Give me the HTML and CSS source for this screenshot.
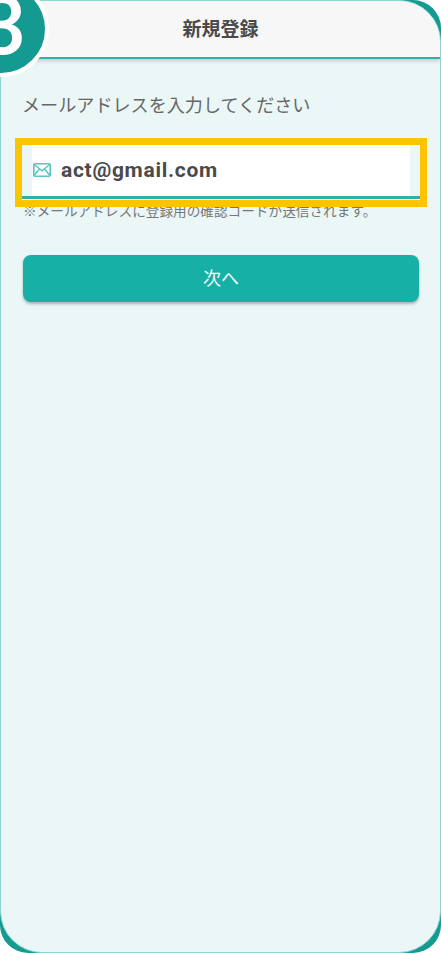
FILE: index.html
```html
<!DOCTYPE html>
<html lang="ja">
<head>
<meta charset="utf-8">
<title>新規登録</title>
<link rel="stylesheet" href="styles.css">
</head>
<body>
<div class="frame">
  <div class="screen">
    <header class="header"><h1 class="title">新規登録</h1></header>
    <main class="content">
      <p class="label">メールアドレスを入力してください</p>
      <div class="field">
        <div class="field-inner">
          <svg class="mail-icon" viewBox="0 0 18 14" width="18" height="14" aria-hidden="true">
            <rect x="0.8" y="0.8" width="16.4" height="12.4" rx="1.5" fill="none" stroke="#57c6bd" stroke-width="1.6"/>
            <path d="M1 1.2 L9 7.8 L17 1.2 M1 12.8 L6.6 5.8 M17 12.8 L11.4 5.8" fill="none" stroke="#57c6bd" stroke-width="1.4"/>
          </svg>
          <span class="email">act@gmail.com</span>
        </div>
      </div>
      <p class="hint">※メールアドレスに登録用の確認コードが送信されます。</p>
      <button class="next" type="button">次へ</button>
    </main>
  </div>
</div>
<div class="badge"><span class="badge-num">3</span></div>
</body>
</html>
```
FILE: styles.css
```css
* { box-sizing: border-box; }
html, body {
  margin: 0;
  padding: 0;
  width: 441px;
  height: 953px;
  overflow: hidden;
  background: #fff;
  font-family: "Noto Sans CJK JP", "Noto Sans", sans-serif;
}
.frame {
  width: 441px;
  height: 953px;
  background: #159a92;
  border-radius: 28px;
}
.screen {
  width: 100%;
  height: 100%;
  border: 1px solid #8fd6cf;
  border-radius: 42px;
  background: #eaf7f6;
  overflow: hidden;
  display: flex;
  flex-direction: column;
}
.header {
  height: 58px;
  flex: none;
  padding-bottom: 4px;
  background: #f7f7f7;
  border-bottom: 2px solid #2db1a8;
  box-shadow: 0 2px 4px rgba(0, 0, 0, 0.18);
  display: flex;
  align-items: center;
  justify-content: center;
}
.title {
  margin: 0;
  font-size: 19px;
  font-weight: 700;
  color: #4a4a4a;
  line-height: 1;
}
.content {
  padding: 0 21px;
  display: flex;
  flex-direction: column;
}
.label {
  margin: 32px 0 0;
  font-size: 18.1px;
  line-height: 26px;
  color: #666;
  white-space: nowrap;
}
.field {
  position: relative;
  z-index: 1;
  margin: 28px 0 0;
  height: 55px;
  width: 398px;
  outline: 7px solid #ffc300;
  background: #eaf7f6;
}
.field-inner {
  margin: 0 10px;
  height: 51px;
  background: #fff;
  display: flex;
  align-items: center;
  gap: 10px;
  padding: 0 0 1px 1px;
}
.field::after {
  content: "";
  display: block;
  height: 4px;
  background: linear-gradient(#2db1a8 0 3px, #fff 3px);
}
.mail-icon { flex: none; }
.email {
  font-family: Roboto, "Liberation Sans", sans-serif;
  font-weight: 700;
  font-size: 21px;
  letter-spacing: 0.7px;
  color: #4a4a4a;
}
.hint {
  margin: 1px 0 0 1px;
  font-size: 13.65px;
  line-height: 18px;
  color: #777;
  white-space: nowrap;
}
.next {
  margin: 36px 0 0 1px;
  padding: 0 0 3px;
  height: 47px;
  width: 396px;
  border: 0;
  border-radius: 8px;
  background: #17b0a7;
  box-shadow: 0 2px 3px rgba(0, 0, 0, 0.28);
  color: #f2fbfa;
  font-family: inherit;
  font-size: 18px;
}
.badge {
  position: absolute;
  left: -47px;
  top: -19px;
  width: 96px;
  height: 96px;
  border: 4px solid #fff;
  border-radius: 50%;
  background: #159a92;
  display: flex;
  align-items: center;
  justify-content: center;
}
.badge-num {
  font-family: Roboto, sans-serif;
  font-weight: 500;
  font-size: 82px;
  line-height: 1;
  color: #fff;
  transform: translate(2px, -3px);
}
```
